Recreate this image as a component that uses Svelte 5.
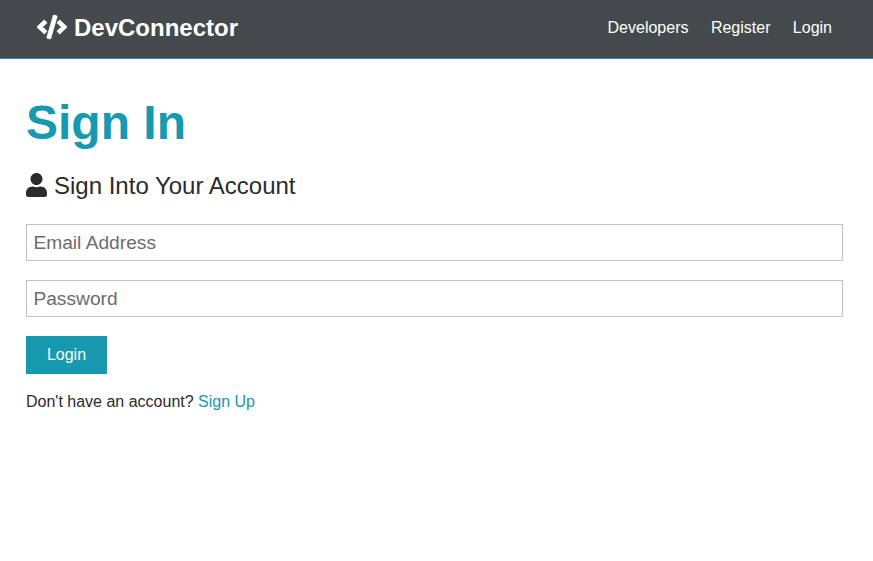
<script>
  let email = $state('');
  let password = $state('');
  const links = ['Developers', 'Register', 'Login'];
</script>

<nav>
  <a class="brand" href="#home">
    <svg class="code" viewBox="0 0 640 512" aria-hidden="true"><path fill="currentColor" stroke="currentColor" stroke-width="14" d="M278.900 511.500l-61-17.700c-6.400-1.800-10-8.500-8.200-14.900L346.200 8.700c1.800-6.400 8.500-10 14.900-8.200l61 17.700c6.400 1.800 10 8.500 8.200 14.900L293.800 503.300c-1.900 6.400-8.500 10.100-14.900 8.200zm-114-112.200l43.500-46.400c4.600-4.900 4.300-12.700-.8-17.200L117 256l90.600-79.700c5.100-4.500 5.500-12.300.8-17.200l-43.500-46.400c-4.500-4.800-12.100-5.100-17-.5L3.800 247.200c-5.100 4.700-5.100 12.800 0 17.500l144.100 135.100c4.900 4.600 12.500 4.400 17-.5zm327.200.6l144.100-135.100c5.100-4.700 5.100-12.800 0-17.500L492.100 112.100c-4.800-4.500-12.400-4.300-17 .5L431.600 159c-4.600 4.900-4.300 12.700.8 17.200L523 256l-90.600 79.700c-5.100 4.500-5.500 12.300-.8 17.200l43.500 46.400c4.500 4.900 12.100 5.100 17 .6z"/></svg>
    <span>DevConnector</span>
  </a>
  <div class="links">
    {#each links as link}<a href="#{link.toLowerCase()}">{link}</a>{/each}
  </div>
</nav>

<main>
  <h1>Sign In</h1>
  <p class="lead">
    <svg class="user" viewBox="0 0 448 512" aria-hidden="true"><path fill="currentColor" d="M224 256c70.700 0 128-57.300 128-128S294.700 0 224 0 96 57.300 96 128s57.300 128 128 128zm89.600 32h-16.700c-22.200 10.200-46.900 16-72.900 16s-50.600-5.800-72.900-16h-16.700C60.200 288 0 348.200 0 422.400V464c0 26.500 21.500 48 48 48h352c26.500 0 48-21.500 48-48v-41.600c0-74.200-60.200-134.400-134.400-134.400z"/></svg>
    <span>Sign Into Your Account</span>
  </p>
  <form onsubmit={(e) => e.preventDefault()}>
    <input type="email" placeholder="Email Address" bind:value={email} />
    <input type="password" placeholder="Password" bind:value={password} />
    <button type="submit">Login</button>
  </form>
  <p class="signup">Don't have an account? <a href="#register">Sign Up</a></p>
</main>

<style>
  :global(body) {
    margin: 0;
    background: #fff;
    color: #2b2b2b;
    font: 16px/1.6 "Liberation Sans", Arial, sans-serif;
  }
  * { box-sizing: border-box; }
  a { color: #1799b0; text-decoration: none; }
  nav {
    height: 59px;
    display: flex;
    align-items: center;
    justify-content: space-between;
    padding: 0 41px 3px 37px;
    background: #44494c;
    border-bottom: 1px solid #1799b0;
  }
  nav a { color: #fff; }
  .brand { display: flex; align-items: center; gap: 7px; font-size: 24px; font-weight: 700; }
  .brand span { padding-top: 1px; }
  .code { width: 30px; height: 24px; overflow: visible; }
  .links { display: flex; gap: 22.4px; }
  main { padding: 25px 30px 0 26px; }
  h1 { margin: 0; font-size: 48px; line-height: 77px; color: #1799b0; }
  .lead { display: flex; align-items: center; gap: 7px; margin: 6px 0 19px; font-size: 24px; line-height: 38px; }
  .user { width: 21px; height: 24px; margin-bottom: 2px; }
  form { display: flex; flex-direction: column; align-items: flex-start; }
  input {
    width: 100%;
    height: 37px;
    margin: 0 0 19px;
    padding: 0 6.4px;
    border: 1px solid #c2c2c2;
    border-radius: 0;
    font: 19.2px "Liberation Sans", Arial, sans-serif;
  }
  input::placeholder { color: #6c6c6c; }
  button {
    width: 81px;
    height: 38px;
    padding: 0;
    border: 0;
    background: #1799b0;
    color: #fff;
    font: 16px "Liberation Sans", Arial, sans-serif;
  }
  .signup { margin: 15px 0 0; }
</style>
